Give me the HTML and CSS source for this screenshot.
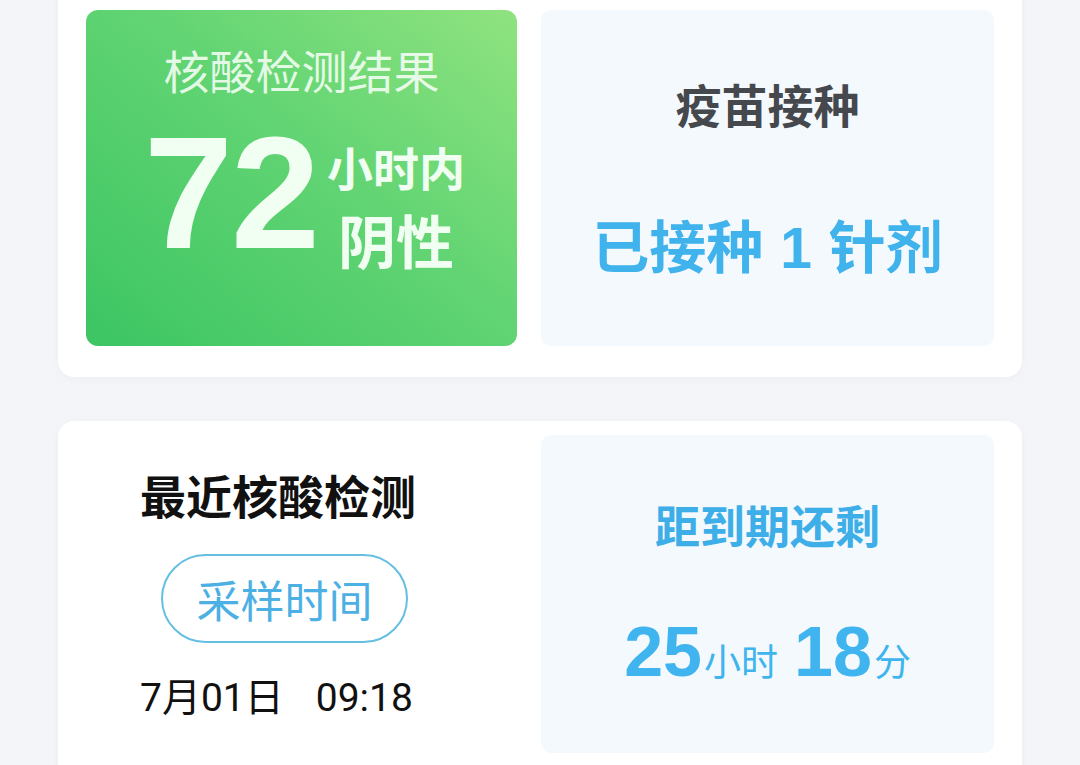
FILE: index.html
```html
<!DOCTYPE html>
<html lang="zh-CN">
<head>
<meta charset="utf-8">
<title>健康码</title>
<link rel="stylesheet" href="styles.css">
</head>
<body>
<div class="page">
  <section class="card card-top">
    <div class="result">
      <div class="result-title">核酸检测结果</div>
      <div class="result-row">
        <div class="result-num">72</div>
        <div class="result-side">
          <div class="side-a">小时内</div>
          <div class="side-b">阴性</div>
        </div>
      </div>
    </div>
    <div class="panel panel-vac">
      <div class="vac-title">疫苗接种</div>
      <div class="vac-value">已接种 <span class="num">1</span> 针剂</div>
    </div>
  </section>

  <section class="card card-bottom">
    <div class="recent">
      <div class="recent-title">最近核酸检测</div>
      <div class="pill">采样时间</div>
      <div class="recent-date"><span>7月01日</span><span class="time">09:18</span></div>
    </div>
    <div class="panel panel-left">
      <div class="left-title">距到期还剩</div>
      <div class="left-value"><span class="big">25</span><span class="unit">小时</span><span class="big big-2">18</span><span class="unit">分</span></div>
    </div>
  </section>
</div>
</body>
</html>
```

FILE: styles.css
```css
* { box-sizing: border-box; }
html, body {
  margin: 0;
  padding: 0;
  background: #f3f5f9;
  overflow: hidden;
}
body {
  font-family: "Noto Sans CJK SC", "Noto Sans", sans-serif;
  width: 1080px;
  height: 765px;
}
.page {
  padding: 0 58px;
  display: flex;
  flex-direction: column;
  gap: 44px;
}
.card {
  background: #ffffff;
  border-radius: 16px;
  display: grid;
  grid-template-columns: 431px 453px;
  column-gap: 24px;
  padding: 0 28px;
  box-shadow: 0 2px 10px rgba(30, 40, 60, 0.03);
}
.card-top {
  margin-top: -24px;
  padding-top: 34px;
  padding-bottom: 31px;
}
.card-bottom {
  padding-top: 14px;
  padding-bottom: 30px;
}

/* green result */
.result {
  height: 336px;
  border-radius: 12px;
  background: linear-gradient(40deg, #3cc563 0%, #62d473 55%, #8fe37f 100%);
  display: flex;
  flex-direction: column;
  align-items: center;
  padding-top: 36px;
}
.result-title {
  font-size: 46px;
  line-height: 1;
  font-weight: 400;
  color: rgba(246, 255, 246, 0.88);
}
.result-row {
  display: flex;
  align-items: flex-start;
  margin-top: 21px;
  gap: 9px;
  margin-left: 6px;
}
.result-num {
  font-family: "Liberation Sans", Arial, sans-serif;
  font-weight: 700;
  font-size: 160px;
  line-height: 1;
  color: #f1fff2;
  letter-spacing: -2px;
}
.result-side {
  display: flex;
  flex-direction: column;
  align-items: center;
  margin-top: 30px;
  color: #f1fff2;
  font-weight: 700;
}
.side-a { font-size: 46px; line-height: 1; }
.side-b { font-size: 58px; line-height: 1; margin-top: 21px; }

/* panels */
.panel {
  background: #f3f9fd;
  border-radius: 10px;
  display: flex;
  flex-direction: column;
  align-items: center;
}
.panel-vac {
  height: 336px;
  padding-top: 70px;
}
.vac-title {
  font-size: 46px;
  font-weight: 700;
  line-height: 1;
  color: #45484c;
}
.vac-value {
  margin-top: 89px;
  font-size: 57px;
  font-weight: 700;
  line-height: 1;
  color: #40b2ec;
  white-space: pre;
}
.num {
  font-family: "Liberation Sans", Arial, sans-serif;
  margin: 0 4px;
}

/* recent test */
.recent {
  display: flex;
  flex-direction: column;
  align-items: flex-start;
  padding-left: 54px;
  padding-top: 36px;
}
.recent-title {
  font-size: 46px;
  font-weight: 700;
  line-height: 1;
  color: #111111;
}
.pill {
  margin-top: 37px;
  margin-left: 21px;
  width: 247px;
  height: 89px;
  border: 2px solid #66bfe2;
  border-radius: 45px;
  display: flex;
  align-items: center;
  justify-content: center;
  font-size: 44px;
  line-height: 1;
  color: #4cb0e4;
}
.recent-date {
  margin-top: 36px;
  font-family: "Roboto", "Noto Sans CJK SC", sans-serif;
  font-size: 39px;
  line-height: 1;
  color: #111111;
  display: flex;
  gap: 32px;
}

.panel-left {
  height: 318px;
  padding-top: 67px;
}
.left-title {
  font-size: 45px;
  font-weight: 700;
  line-height: 1;
  color: #3eaee8;
}
.left-value {
  margin-top: 70px;
  display: flex;
  align-items: baseline;
  color: #40b4ee;
}
.big {
  font-family: "Liberation Sans", Arial, sans-serif;
  font-weight: 700;
  font-size: 70px;
  line-height: 1;
}
.big-2 { margin-left: 16px; }
.unit {
  font-size: 37px;
  line-height: 1;
  margin-left: 2px;
}
```
